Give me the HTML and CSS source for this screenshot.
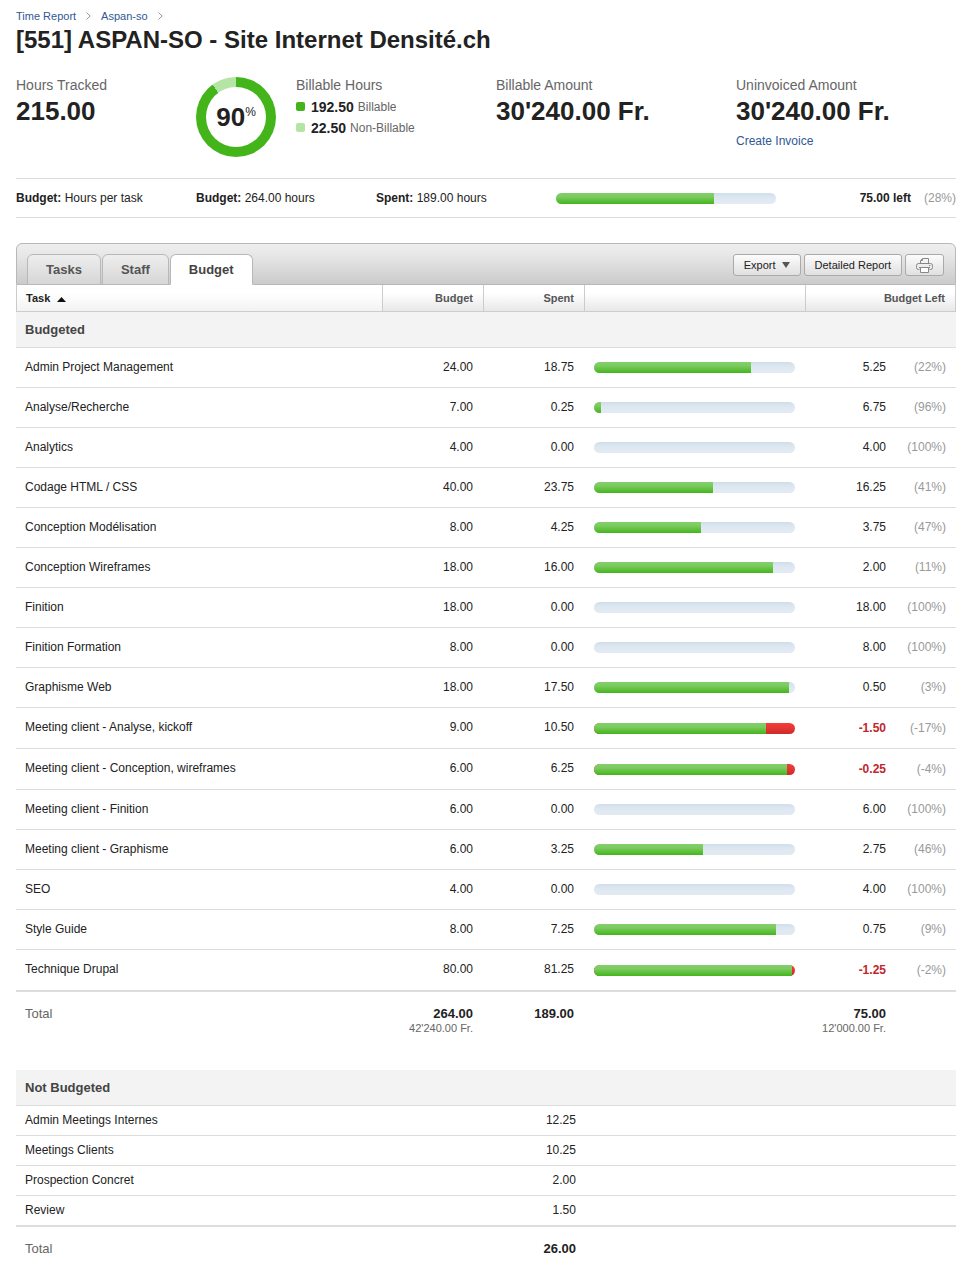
FILE: index.html
```
<!DOCTYPE html>
<html lang="en">
<head>
<meta charset="utf-8">
<title>[551] ASPAN-SO - Site Internet Densité.ch</title>
<link rel="stylesheet" href="styles.css">
</head>
<body>
<main class="page">
  <header>
    <nav class="crumbs" aria-label="Breadcrumb">
      <a href="#">Time Report</a>
      <svg class="crumb-arrow" width="5" height="8" viewBox="0 0 5 8"><path d="M.5 .5 4.2 4 .5 7.5" fill="none" stroke="#999"/></svg>
      <a href="#">Aspan-so</a>
      <svg class="crumb-arrow" width="5" height="8" viewBox="0 0 5 8"><path d="M.5 .5 4.2 4 .5 7.5" fill="none" stroke="#999"/></svg>
    </nav>
    <h1 class="title">[551] ASPAN-SO - Site Internet Densité.ch</h1>
  </header>

  <section class="stats">
    <div><div class="label">Hours Tracked</div><div class="figure">215.00</div></div>
    <div class="donut"><div class="donut-hole"><span class="donut-value">90</span><span class="donut-unit">%</span></div></div>
    <div>
      <div class="label">Billable Hours</div>
      <div class="legend"><i class="swatch"></i><b>192.50</b><span>Billable</span></div>
      <div class="legend"><i class="swatch swatch-light"></i><b>22.50</b><span>Non-Billable</span></div>
    </div>
    <div><div class="label">Billable Amount</div><div class="figure">30'240.00 Fr.</div></div>
    <div><div class="label">Uninvoiced Amount</div><div class="figure">30'240.00 Fr.</div><a class="create" href="#">Create Invoice</a></div>
  </section>

  <section class="summary">
    <div><b>Budget:</b> Hours per task</div>
    <div><b>Budget:</b> 264.00 hours</div>
    <div><b>Spent:</b> 189.00 hours</div>
    <div class="bar"><div class="fill" style="width:71.6%"></div></div>
    <div class="remaining"><b>75.00 left</b></div>
    <div class="pct">(28%)</div>
  </section>

  <section>
    <div class="toolbar">
      <div class="tabs" role="tablist">
        <button class="tab" role="tab">Tasks</button>
        <button class="tab" role="tab">Staff</button>
        <button class="tab tab-active" role="tab" aria-selected="true">Budget</button>
      </div>
      <div class="actions">
        <button class="btn">Export <svg width="8" height="6" viewBox="0 0 8 6"><path d="M0 0h8L4 6z" fill="#555"/></svg></button>
        <button class="btn">Detailed Report</button>
        <button class="btn" aria-label="Print"><svg width="17" height="15" viewBox="0 0 17 15" fill="none" stroke="#888"><path d="M4.500 5.500V2.500L6.500.5H12.500V5.500"/><path d="M6.500 1V2.500H5"/><path d="M3.500 11.500H2.500Q.5 11.500 .5 9.500V7.500Q.5 5.500 2.500 5.500H14.500Q16.500 5.500 16.500 7.500V9.500Q16.500 11.500 14.500 11.500H13.500"/><path d="M3 9.500H14"/><path d="M4.500 9.500H12.500V14.500H4.500z" fill="#fff"/><path d="M13 7.500H14.500"/></svg></button>
      </div>
    </div>

    <table class="grid">
      <colgroup><col><col class="c-num"><col class="c-num"><col class="c-bar"><col class="c-left"><col class="c-pct"></colgroup>
      <thead>
        <tr>
          <th class="sorted">Task <svg class="sort" width="9" height="5" viewBox="0 0 9 5"><path d="M0 5h9L4.500 0z" fill="#111"/></svg></th>
          <th>Budget</th><th>Spent</th><th></th><th colspan="2">Budget Left</th>
        </tr>
      </thead>
      <tbody>
        <tr class="group"><th colspan="6">Budgeted</th></tr>
        <tr><td>Admin Project Management</td><td>24.00</td><td>18.75</td><td><div class="bar"><div class="fill" style="width:78.1%"></div></div></td><td>5.25</td><td class="pct">(22%)</td></tr>
        <tr><td>Analyse/Recherche</td><td>7.00</td><td>0.25</td><td><div class="bar"><div class="fill" style="width:3.6%"></div></div></td><td>6.75</td><td class="pct">(96%)</td></tr>
        <tr><td>Analytics</td><td>4.00</td><td>0.00</td><td><div class="bar"></div></td><td>4.00</td><td class="pct">(100%)</td></tr>
        <tr><td>Codage HTML / CSS</td><td>40.00</td><td>23.75</td><td><div class="bar"><div class="fill" style="width:59.4%"></div></div></td><td>16.25</td><td class="pct">(41%)</td></tr>
        <tr><td>Conception Modélisation</td><td>8.00</td><td>4.25</td><td><div class="bar"><div class="fill" style="width:53.1%"></div></div></td><td>3.75</td><td class="pct">(47%)</td></tr>
        <tr><td>Conception Wireframes</td><td>18.00</td><td>16.00</td><td><div class="bar"><div class="fill" style="width:88.9%"></div></div></td><td>2.00</td><td class="pct">(11%)</td></tr>
        <tr><td>Finition</td><td>18.00</td><td>0.00</td><td><div class="bar"></div></td><td>18.00</td><td class="pct">(100%)</td></tr>
        <tr><td>Finition Formation</td><td>8.00</td><td>0.00</td><td><div class="bar"></div></td><td>8.00</td><td class="pct">(100%)</td></tr>
        <tr><td>Graphisme Web</td><td>18.00</td><td>17.50</td><td><div class="bar"><div class="fill" style="width:97.2%"></div></div></td><td>0.50</td><td class="pct">(3%)</td></tr>
        <tr class="over"><td>Meeting client - Analyse, kickoff</td><td>9.00</td><td>10.50</td><td><div class="bar"><div class="fill" style="width:85.7%"></div></div></td><td class="neg">-1.50</td><td class="pct">(-17%)</td></tr>
        <tr class="over"><td>Meeting client - Conception, wireframes</td><td>6.00</td><td>6.25</td><td><div class="bar"><div class="fill" style="width:96%"></div></div></td><td class="neg">-0.25</td><td class="pct">(-4%)</td></tr>
        <tr><td>Meeting client - Finition</td><td>6.00</td><td>0.00</td><td><div class="bar"></div></td><td>6.00</td><td class="pct">(100%)</td></tr>
        <tr><td>Meeting client - Graphisme</td><td>6.00</td><td>3.25</td><td><div class="bar"><div class="fill" style="width:54.2%"></div></div></td><td>2.75</td><td class="pct">(46%)</td></tr>
        <tr><td>SEO</td><td>4.00</td><td>0.00</td><td><div class="bar"></div></td><td>4.00</td><td class="pct">(100%)</td></tr>
        <tr><td>Style Guide</td><td>8.00</td><td>7.25</td><td><div class="bar"><div class="fill" style="width:90.6%"></div></div></td><td>0.75</td><td class="pct">(9%)</td></tr>
        <tr class="over"><td>Technique Drupal</td><td>80.00</td><td>81.25</td><td><div class="bar"><div class="fill" style="width:98.5%"></div></div></td><td class="neg">-1.25</td><td class="pct">(-2%)</td></tr>
      </tbody>
      <tfoot>
        <tr><td>Total</td><td><b>264.00</b><small>42'240.00 Fr.</small></td><td><b>189.00</b></td><td></td><td><b>75.00</b><small>12'000.00 Fr.</small></td><td></td></tr>
      </tfoot>
    </table>

    <table class="grid grid-compact">
      <colgroup><col><col class="c-spent"><col class="c-rest"></colgroup>
      <tbody>
        <tr class="group"><th colspan="3">Not Budgeted</th></tr>
        <tr><td>Admin Meetings Internes</td><td>12.25</td><td></td></tr>
        <tr><td>Meetings Clients</td><td>10.25</td><td></td></tr>
        <tr><td>Prospection Concret</td><td>2.00</td><td></td></tr>
        <tr><td>Review</td><td>1.50</td><td></td></tr>
      </tbody>
      <tfoot>
        <tr><td>Total</td><td><b>26.00</b></td><td></td></tr>
      </tfoot>
    </table>
  </section>
</main>
</body>
</html>
```
FILE: styles.css
```
* { box-sizing: border-box; }
body {
  margin: 0;
  background: #fff;
  color: #222;
  font: 12px/16px "Liberation Sans", Arial, sans-serif;
}
.page { padding: 7px 17px 0 16px; }
a { color: #2f5894; text-decoration: none; }
button { font-family: inherit; cursor: pointer; }

.crumbs { display: flex; align-items: center; gap: 10px; height: 17px; font-size: 11px; }
.title { margin: 0; font-size: 24px; line-height: 32px; }

.stats {
  display: grid;
  grid-template-columns: 180px 100px 200px 240px 1fr;
  height: 102px;
  margin-top: 20px;
}
.label { color: #666; font-size: 14px; line-height: 18px; }
.figure { font-size: 26px; font-weight: bold; line-height: 34px; }
.create { display: block; margin-top: 5px; }
.donut {
  width: 80px;
  height: 80px;
  margin-top: 1px;
  padding: 10px;
  border-radius: 50%;
  background: conic-gradient(#43b51b 0 90%, #b4e5a4 90%);
}
.donut-hole {
  display: flex;
  justify-content: center;
  height: 60px;
  padding-top: 14px;
  border-radius: 50%;
  background: #fff;
}
.donut-value { font-size: 26px; font-weight: bold; line-height: 32px; }
.donut-unit { padding-top: 3px; }
.legend { display: flex; align-items: center; height: 21px; color: #666; }
.legend b { margin-right: 4px; color: #222; font-size: 14px; }
.legend:nth-child(2) { margin-top: 2px; }
.swatch { width: 9px; height: 9px; margin-right: 6px; border-radius: 2px; background: #43b51b; }
.swatch-light { background: #b4e5a4; }

.summary {
  display: grid;
  grid-template-columns: 180px 180px 180px 220px 1fr 45px;
  align-items: center;
  height: 40px;
  margin-bottom: 25px;
  border: solid #ddd;
  border-width: 1px 0;
}
.remaining { text-align: right; }
.pct { color: #999; text-align: right; }

.bar {
  height: 11px;
  overflow: hidden;
  border-radius: 6px;
  background: linear-gradient(#cfdfec, #dfe8f1 50%, #e2eaf2);
}
.fill { height: 100%; background: linear-gradient(#84cf6c, #7bcb60 35%, #43b51b); }
.over .bar { background: linear-gradient(#f03e3c, #e93633 40%, #c92c2b); }

.toolbar {
  display: flex;
  justify-content: space-between;
  height: 42px;
  padding: 10px 11px 0 10px;
  border: 1px solid #b8b8b8;
  border-radius: 6px 6px 0 0;
  background: linear-gradient(#eee, #e8e8e8 25%, #cbcbcb);
}
.tabs { display: flex; gap: 1px; margin-bottom: -1px; }
.tab {
  padding: 0 18px;
  border: 1px solid #b8b8b8;
  border-radius: 6px 6px 0 0;
  background: linear-gradient(#eee, #d6d6d6);
  color: #555;
  font-size: 13px;
  font-weight: bold;
}
.tab-active { border-bottom-color: #fff; background: #fff; color: #444; }
.actions { display: flex; gap: 3px; }
.btn {
  display: flex;
  align-items: center;
  gap: 6px;
  height: 22px;
  padding: 0 10px;
  border: 1px solid #aaa;
  border-radius: 3px;
  background: linear-gradient(#fcfcfc, #e0e0e0);
  color: #222;
  font-size: 11px;
}

.grid { width: 100%; table-layout: fixed; border-collapse: separate; border-spacing: 0; }
.c-num { width: 101px; }
.c-bar { width: 221px; }
.c-left { width: 80px; }
.c-pct { width: 70px; }
.c-spent { width: 80px; }
.c-rest { width: 369px; }

.grid th, .grid td { padding: 0 11px 0 9px; text-align: right; }
.grid th:first-child, .grid td:first-child { text-align: left; }
.grid thead th {
  height: 27px;
  padding-right: 10px;
  border: solid #ccc;
  border-width: 0 1px 1px 0;
  background: linear-gradient(#fff 30%, #e8e8e8);
  color: #555;
  font-size: 11px;
}
.grid thead th.sorted { border-left-width: 1px; background: linear-gradient(#fff 30%, #f3f3f3); color: #222; }
.sort { margin-left: 4px; }
.grid tbody td { height: 40px; padding-bottom: 2px; border-bottom: 1px solid #ddd; }
.grid tbody td:nth-child(4) { padding-bottom: 0; }
.grid tbody .over td { height: 41px; }
.grid tbody tr:last-child td { height: 42px; border-bottom-width: 2px; }
.grid tbody td:nth-child(5), .grid tfoot td:nth-child(5) { padding-left: 0; padding-right: 0; }
.grid .pct { padding-right: 10px; }
.grid .neg { color: #c0272d; font-weight: bold; }
.grid .over .neg, .grid .over .pct { padding-bottom: 0; }
.grid .group th {
  height: 36px;
  border-bottom: 1px solid #ddd;
  background: #f3f3f3;
  color: #444;
  font-size: 13px;
}
.grid tfoot td { height: 78px; padding-top: 14px; color: #666; font-size: 13px; vertical-align: top; }
.grid tfoot b { color: #222; }
.grid small { display: block; font-size: 11px; line-height: 12px; }
.grid-compact tbody td { height: 30px; }
.grid-compact tbody tr:last-child td { height: 31px; }
.grid-compact tfoot td { height: 47px; }
```
